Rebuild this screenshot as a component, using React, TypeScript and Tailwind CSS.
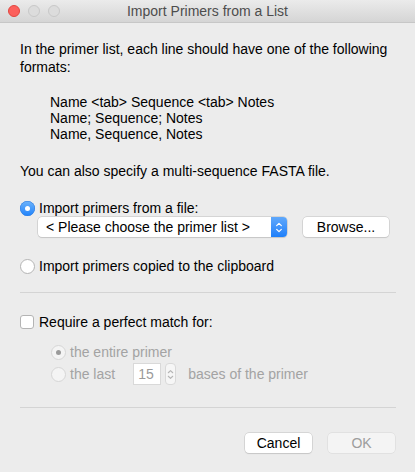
import React from "react";

function Radio({ checked, disabled }: { checked?: boolean; disabled?: boolean }) {
  if (checked && !disabled) {
    return (
      <span className="grid h-[15px] w-[15px] shrink-0 place-items-center rounded-full bg-gradient-to-b from-[#6cb3fa] to-[#1a82fb] shadow-[inset_0_0_0_0.5px_#2f7be0]">
        <span className="h-[5px] w-[5px] rounded-full bg-white" />
      </span>
    );
  }
  return (
    <span
      className={`grid h-[15px] w-[15px] shrink-0 place-items-center rounded-full border ${
        disabled ? "border-[#d6d6d6] bg-[#f4f4f4]" : "border-[#b4b4b4] bg-white"
      }`}
    >
      {checked && <span className="h-[5px] w-[5px] rounded-full bg-[#9a9a9a]" />}
    </span>
  );
}

function Chevrons({ className }: { className: string }) {
  return (
    <svg viewBox="0 0 8 14" className={className} fill="none" stroke="currentColor" strokeWidth={1.3} strokeLinecap="round" strokeLinejoin="round">
      <path d="M1.5 5L4 2.5L6.5 5" />
      <path d="M1.5 9L4 11.5L6.5 9" />
    </svg>
  );
}

export default function App() {
  return (
    <div className="flex h-[472px] w-[415px] flex-col overflow-hidden bg-[#ececec] font-['Liberation_Sans',Arial,sans-serif] text-[14px] text-black">
      {/* title bar */}
      <div className="relative flex h-[23px] shrink-0 items-center justify-center border-b border-[#c7c7c7] bg-gradient-to-b from-[#ebebeb] to-[#d5d5d5]">
        <div className="absolute left-[8px] top-[5px] flex gap-[8px]">
          <span className="h-[12px] w-[12px] rounded-full border border-[#e2463f] bg-[#fc605c]" />
          <span className="h-[12px] w-[12px] rounded-full border border-[#c8c8c8] bg-[#dcdcdc]" />
          <span className="h-[12px] w-[12px] rounded-full border border-[#c8c8c8] bg-[#dcdcdc]" />
        </div>
        <span className="text-[14px] text-[#4d4d4d]">Import Primers from a List</span>
      </div>

      <div className="flex flex-1 flex-col pl-[20px] pr-[19px]">
        <p className="mt-[17px] leading-[18px]">
          In the primer list, each line should have one of the following formats:
        </p>
        <div className="mt-[18px] pl-[30px] leading-[16px]">
          <p>Name &lt;tab&gt; Sequence &lt;tab&gt; Notes</p>
          <p>Name; Sequence; Notes</p>
          <p>Name, Sequence, Notes</p>
        </div>
        <p className="mt-[21px] leading-[16px]">You can also specify a multi-sequence FASTA file.</p>

        <label className="mt-[21px] flex h-[16px] items-center gap-[4px]">
          <Radio checked />
          <span>Import primers from a file:</span>
        </label>
        <div className="mt-[1px] flex items-center pl-[18px]">
          <div className="flex h-[20px] w-[249px] items-center overflow-hidden rounded-[4px] bg-white shadow-[0_0_0_0.5px_#bdbdbd,0_1px_1px_rgba(0,0,0,0.12)]">
            <span className="flex-1 pl-[8px]">&lt; Please choose the primer list &gt;</span>
            <span className="grid h-full w-[16px] place-items-center bg-gradient-to-b from-[#5fa8fb] to-[#1c7ffa] text-white">
              <Chevrons className="h-[13px] w-[8px]" />
            </span>
          </div>
          <button
            type="button"
            className="ml-[16px] h-[20px] w-[86px] rounded-[4px] bg-white text-[14px] shadow-[0_0_0_0.5px_#c0c0c0,0_1px_1px_rgba(0,0,0,0.12)]"
          >
            Browse...
          </button>
        </div>

        <label className="mt-[21px] flex h-[16px] items-center gap-[4px]">
          <Radio />
          <span>Import primers copied to the clipboard</span>
        </label>

        <div className="mt-[18px] h-px bg-[#d4d4d4]" />

        <label className="mt-[21px] flex h-[16px] items-center gap-[5px]">
          <span className="h-[14px] w-[14px] rounded-[3px] border border-[#b4b4b4] bg-white" />
          <span>Require a perfect match for:</span>
        </label>

        <div className="mt-[14px] flex flex-col pl-[31px] text-[#a3a3a3]">
          <div className="flex h-[16px] items-center gap-[4px]">
            <Radio checked disabled />
            <span>the entire primer</span>
          </div>
          <div className="mt-[3px] flex h-[22px] items-center">
            <Radio disabled />
            <span className="ml-[4px]">the last</span>
            <span className="ml-[18px] flex h-[22px] w-[28px] items-center border border-[#d9d9d9] bg-white pl-[4px] text-[14px] text-[#9a9a9a]">
              15
            </span>
            <span className="ml-[4px] grid h-[22px] w-[11px] place-items-center rounded-[4px] border border-[#d9d9d9] bg-[#f6f6f6] text-[#b5b5b5]">
              <Chevrons className="h-[13px] w-[7px]" />
            </span>
            <span className="ml-[12px]">bases of the primer</span>
          </div>
        </div>

        <div className="mt-[22px] h-px bg-[#d4d4d4]" />

        <div className="mt-[25px] flex justify-end gap-[16px] pr-[1px]">
          <button
            type="button"
            className="h-[20px] w-[67px] rounded-[4px] bg-white text-[14px] shadow-[0_0_0_0.5px_#c0c0c0,0_1px_1px_rgba(0,0,0,0.12)]"
          >
            Cancel
          </button>
          <button
            type="button"
            className="h-[20px] w-[67px] rounded-[4px] bg-[#f4f4f4] text-[14px] text-[#9d9d9d] shadow-[0_0_0_0.5px_#d6d6d6]"
          >
            OK
          </button>
        </div>
      </div>
    </div>
  );
}
